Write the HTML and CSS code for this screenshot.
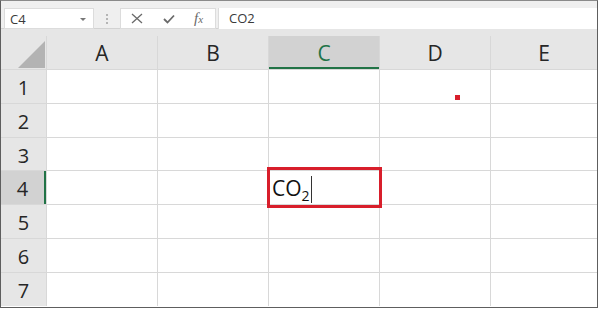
FILE: index.html
```html
<!DOCTYPE html>
<html lang="en">
<head>
  <meta charset="UTF-8">
  <title>Sheet</title>
  <link rel="stylesheet" href="styles.css">
</head>
<body>
  <div class="frame">
    <div class="formula-bar">
      <div class="name-box">
        <span>C4</span>
        <span class="drop"></span>
      </div>
      <div class="grip"><i></i><i></i><i></i></div>
      <div class="fx-box">
        <svg class="ico" width="12" height="11" viewBox="0 0 12 11">
          <path d="M1 1 L11 10 M11 1 L1 10" stroke="#6a6a6a" stroke-width="1.3" fill="none"/>
        </svg>
        <svg class="ico" width="12" height="10" viewBox="0 0 12 10">
          <path d="M1 5 L4.5 8.5 L11 1.5" stroke="#6a6a6a" stroke-width="1.8" fill="none"/>
        </svg>
        <span class="fx">f<small>x</small></span>
      </div>
      <div class="formula-input">CO2</div>
    </div>

    <div class="head-gap"></div>

    <div class="sheet">
      <div class="corner"><div class="tri"></div></div>
      <div class="colhead">A</div>
      <div class="colhead">B</div>
      <div class="colhead active">C</div>
      <div class="colhead">D</div>
      <div class="colhead">E</div>

      <div class="rowhead">1</div>
      <div class="cell"></div><div class="cell"></div><div class="cell"></div>
      <div class="cell"><span class="dot"></span></div><div class="cell"></div>

      <div class="rowhead">2</div>
      <div class="cell"></div><div class="cell"></div><div class="cell"></div><div class="cell"></div><div class="cell"></div>

      <div class="rowhead">3</div>
      <div class="cell"></div><div class="cell"></div><div class="cell"></div><div class="cell"></div><div class="cell"></div>

      <div class="rowhead active">4</div>
      <div class="cell"></div><div class="cell"></div>
      <div class="cell editing">
        <span class="entry">CO<span class="sub">2</span><span class="caret"></span></span>
        <div class="mark"></div>
      </div>
      <div class="cell"></div><div class="cell"></div>

      <div class="rowhead">5</div>
      <div class="cell"></div><div class="cell"></div><div class="cell"></div><div class="cell"></div><div class="cell"></div>

      <div class="rowhead">6</div>
      <div class="cell"></div><div class="cell"></div><div class="cell"></div><div class="cell"></div><div class="cell"></div>

      <div class="rowhead">7</div>
      <div class="cell"></div><div class="cell"></div><div class="cell"></div><div class="cell"></div><div class="cell"></div>
    </div>
  </div>
</body>
</html>
```

FILE: styles.css
```css
body {
  margin: 0;
  background-color: #fff;
  font-family: "Open Sans", "Noto Sans", sans-serif;
}

.frame {
  width: 598px;
  height: 308px;
  box-sizing: border-box;
  border: 1px solid #5e5e5e;
  border-top-color: #8a8a8a;
  overflow: hidden;
}

/* formula bar */
.formula-bar {
  height: 28px;
  box-sizing: border-box;
  padding: 7px 0 0 3px;
  background-color: #efefef;
  border-bottom: 1px solid #d2d2d2;
  display: flex;
  align-items: flex-start;
  font-size: 13px;
  color: #3a3a3a;
}

.name-box {
  width: 90px;
  height: 21px;
  box-sizing: border-box;
  background-color: #fff;
  border: 1px solid #dcdcdc;
  display: flex;
  align-items: center;
  justify-content: space-between;
  padding: 0 7px 0 5px;
}

.drop {
  width: 0;
  height: 0;
  border-left: 3px solid transparent;
  border-right: 3px solid transparent;
  border-top: 3px solid #777;
  margin-top: 1px;
}

.grip {
  width: 26px;
  height: 21px;
  display: flex;
  flex-direction: column;
  align-items: center;
  justify-content: center;
  gap: 2px;
}

.grip i {
  width: 2px;
  height: 2px;
  background-color: #b5b5b5;
}

.fx-box {
  width: 96px;
  height: 21px;
  box-sizing: border-box;
  background-color: #fff;
  border: 1px solid #dcdcdc;
  display: flex;
  align-items: center;
  gap: 20px;
  padding-left: 10px;
}

.fx {
  font-family: "Liberation Serif", serif;
  font-style: italic;
  font-size: 15px;
  color: #6a6a6a;
  margin-left: -1px;
}

.fx small {
  font-size: 11px;
}

.formula-input {
  flex: 1;
  height: 21px;
  box-sizing: border-box;
  margin-left: 2px;
  background-color: #fff;
  border-left: 1px solid #dcdcdc;
  padding-left: 10px;
  line-height: 20px;
}

.head-gap {
  height: 7px;
  background-color: #e6e6e6;
}

/* grid */
.sheet {
  display: grid;
  grid-template-columns: 45px 110px 110px 110px 110px 1fr;
  grid-template-rows: 33px 33px 33px 32px 33px 33px 33px 33px;
  gap: 1px;
  background-color: #d8d8d8;
}

.corner {
  background-color: #e6e6e6;
  display: flex;
  justify-content: flex-end;
  align-items: flex-end;
  padding: 0 1px 1px 0;
}

.tri {
  width: 27px;
  height: 27px;
  background-color: #b3b3b3;
  clip-path: polygon(100% 0, 100% 100%, 0 100%);
}

.colhead {
  background-color: #e6e6e6;
  text-align: center;
  font-size: 21px;
  line-height: 33px;
  padding-top: 1px;
  box-sizing: border-box;
  color: #262626;
}

.colhead.active {
  background-color: #d2d2d2;
  color: #217346;
  border-bottom: 2px solid #217346;
}

.rowhead {
  background-color: #e6e6e6;
  text-align: center;
  font-size: 20px;
  line-height: 33px;
  padding-top: 1px;
  box-sizing: border-box;
  color: #262626;
}

.rowhead.active {
  background-color: #d2d2d2;
  border-right: 2px solid #217346;
}

.cell {
  background-color: #fff;
  position: relative;
}

.dot {
  position: absolute;
  left: 75px;
  top: 25px;
  width: 5px;
  height: 5px;
  background-color: #d81e2b;
}

.editing {
  z-index: 1;
  padding: 1px 0 0 3px;
  font-size: 21px;
  line-height: 33px;
  color: #111;
}

.sub {
  font-size: 14px;
  vertical-align: -5px;
}

.caret {
  display: inline-block;
  width: 1px;
  height: 27px;
  background-color: #333;
  vertical-align: -7px;
  margin-left: 1px;
}

.mark {
  position: absolute;
  left: -2px;
  top: -4px;
  width: 115px;
  height: 41px;
  box-sizing: border-box;
  border: 3px solid #d81e2b;
}
```
